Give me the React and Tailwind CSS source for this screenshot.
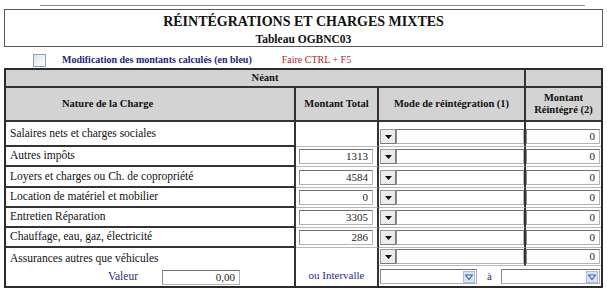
import React from "react";

function Drop() {
  return (
    <div className="w-[16px] h-[15px] shrink-0 bg-[#ececec] border border-[#9a9a9a] border-r-[#7a7a7a] border-b-[#7a7a7a] flex items-center justify-center">
      <svg width="7" height="4" viewBox="0 0 7 4">
        <path d="M0 0H7L3.5 4Z" fill="#111" />
      </svg>
    </div>
  );
}

function Box({ value, className }) {
  return (
    <div
      className={
        "h-[15px] bg-white border border-[#b4b4b4] border-t-[#707070] border-l-[#8c8c8c] flex items-center justify-end pr-[4px] text-[11px] leading-none text-[#222] " +
        (className || "")
      }
    >
      {value}
    </div>
  );
}

function SelIcon() {
  return (
    <svg width="12" height="12" viewBox="0 0 12 12" className="shrink-0">
      <rect x="0.5" y="0.5" width="11" height="11" fill="#d7e3f6" stroke="#a9bcdc" />
      <path d="M2.5 4H9.5L6 8.5Z" fill="#e8effb" stroke="#3b5cb0" strokeWidth="1.2" strokeLinejoin="round" />
    </svg>
  );
}

function Select({ className }) {
  return (
    <div
      className={
        "h-[15px] bg-white border border-[#b0b0b0] border-t-[#707070] border-l-[#8c8c8c] flex items-center justify-end pr-[1px] " +
        (className || "")
      }
    >
      <SelIcon />
    </div>
  );
}

const rows = [
  { label: "Salaires nets et charges sociales", total: null, h: "h-[25px]" },
  { label: "Autres impôts", total: "1313", h: "h-[20px]" },
  { label: "Loyers et charges ou Ch. de copropriété", total: "4584", h: "h-[21px]" },
  { label: "Location de matériel et mobilier", total: "0", h: "h-[20px]" },
  { label: "Entretien Réparation", total: "3305", h: "h-[20px]" },
  { label: "Chauffage, eau, gaz, électricité", total: "286", h: "h-[20px]" },
];

export default function App() {
  return (
    <div className="w-[607px] h-[293px] bg-white overflow-hidden [font-family:Liberation_Serif,serif] text-[#111]">
      <div className="ml-[40px] mt-[5px] w-[545px] h-px bg-[#8a8a8a]" />
      <div className="ml-[4px] mt-[3px] w-[599px] h-[38px] border border-[#5a5a5a] flex flex-col items-center">
        <div className="mt-[5px] text-[14px] font-bold leading-none">
          RÉINTÉGRATIONS ET CHARGES MIXTES
        </div>
        <div className="mt-[5px] text-[11.5px] font-bold leading-none">Tableau OGBNC03</div>
      </div>
      <div className="h-[21px] flex items-center pt-[5px]">
        <div className="ml-[33px] w-[13px] h-[13px] border border-[#8aa3b8] bg-gradient-to-br from-[#dfe3e6] to-white" />
        <div className="ml-[16px] text-[10px] font-bold text-[#24237f] leading-none">
          Modification des montants calculés (en bleu)
        </div>
        <div className="ml-[30px] text-[10px] text-[#b3252b] leading-none">Faire CTRL + F5</div>
      </div>
      <div className="ml-[4px] w-[599px] border-2 border-[#2b2b2b] text-[11px]">
        <div className="flex h-[18px] bg-[#d3d3d3] border-b-2 border-[#333]">
          <div className="w-[520px] border-r-2 border-[#333] flex items-center justify-center font-bold text-[10.5px] leading-none">
            Néant
          </div>
          <div className="w-[75px]" />
        </div>
        <div className="flex h-[34px] bg-[#d3d3d3] border-b-2 border-[#333] font-bold text-[10.5px] leading-none">
          <div className="w-[290px] border-r-2 border-[#333] flex items-center pl-[56px]">Nature de la Charge</div>
          <div className="w-[83px] border-r-2 border-[#333] flex items-center justify-center">Montant Total</div>
          <div className="w-[147px] border-r-2 border-[#333] flex items-center justify-center">
            Mode de réintégration (1)
          </div>
          <div className="w-[75px] flex flex-col items-center justify-center leading-[12px] text-center">
            <span>Montant</span>
            <span>Réintégré (2)</span>
          </div>
        </div>
        {rows.map((r) => (
          <div key={r.label} className={"flex " + r.h}>
            <div className="w-[290px] border-r-2 border-b-2 border-[#333] flex items-center pl-[4px] leading-none text-[11.5px]">
              {r.label}
            </div>
            <div className="w-[83px] border-r-2 border-r-[#333] border-b border-b-[#b8b8b8] flex items-end pb-[2px]">
              {r.total !== null ? <Box value={r.total} className="ml-[3px] w-[74px]" /> : null}
            </div>
            <div className="w-[147px] border-r-2 border-r-[#333] border-b border-b-[#b8b8b8] flex items-end pb-[2px] pl-[1px]">
              <Drop />
              <Box value="" className="flex-1" />
            </div>
            <div className="w-[75px] border-b border-b-[#b8b8b8] flex items-end pb-[2px]">
              <Box value="0" className="w-[74px]" />
            </div>
          </div>
        ))}
        <div className="flex h-[38px]">
          <div className="w-[290px] border-r-2 border-[#333] flex flex-col text-[11.5px]">
            <div className="pl-[4px] pt-[5px] leading-none">Assurances autres que véhicules</div>
            <div className="flex items-center mt-[5px]">
              <div className="w-[132px] text-right text-[#2a2a86] leading-none">Valeur</div>
              <Box value="0,00" className="ml-[24px] w-[78px]" />
            </div>
          </div>
          <div className="w-[83px] border-r-2 border-[#333] flex items-end justify-center pb-[5px] text-[#2a2a86] leading-none">
            ou Intervalle
          </div>
          <div className="w-[222px] flex flex-col">
            <div className="flex h-[18px]">
              <div className="w-[147px] border-r-2 border-[#333] border-b border-b-[#b8b8b8] flex items-end pb-[1px] pl-[1px]">
                <Drop />
                <Box value="" className="flex-1" />
              </div>
              <div className="w-[75px] border-b border-b-[#b8b8b8] flex items-end pb-[1px]">
                <Box value="0" className="w-[74px]" />
              </div>
            </div>
            <div className="flex items-center mt-[3px]">
              <Select className="ml-[1px] w-[97px]" />
              <div className="ml-[10px] text-[#2a2a86] leading-none">à</div>
              <Select className="ml-[9px] w-[99px]" />
            </div>
          </div>
        </div>
      </div>
    </div>
  );
}
